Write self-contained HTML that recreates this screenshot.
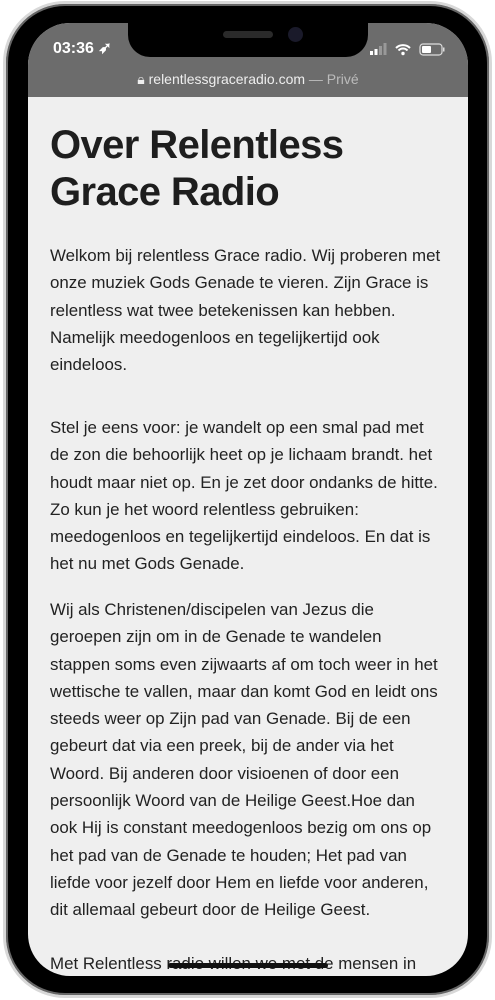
<!DOCTYPE html>
<html><head><meta charset="utf-8"><style>
*{margin:0;padding:0;box-sizing:border-box}
body{width:495px;height:1000px;background:#fff;position:relative;overflow:hidden;font-family:"Liberation Sans",sans-serif}
.frame{position:absolute;left:3px;top:1px;width:489px;height:997px;border-radius:62px;background:#000;border:3px solid #d8d8d8;box-shadow:inset 0 0 0 2px #666}
.screen{position:absolute;left:28px;top:23px;width:440px;height:953px;border-radius:42px;overflow:hidden;background:#efefef}
.bar{position:absolute;left:0;top:0;width:440px;height:74px;background:#6c6c6c}
.notch{position:absolute;left:100px;top:-2px;width:240px;height:36px;background:#000;border-radius:0 0 22px 22px}
.time{position:absolute;left:25px;top:15px;color:#fff;font-size:16px;font-weight:bold}
.url{position:absolute;left:0;width:440px;top:48px;text-align:center;color:#eee;font-size:14px}
.url span{color:#bbb}
h1{position:absolute;left:22px;top:99px;font-size:40px;line-height:47px;color:#1e1e1e;font-weight:bold;letter-spacing:-0.6px}
.p{position:absolute;left:22px;font-size:16.9px;line-height:27.3px;color:#222;white-space:nowrap}
.home{position:absolute;left:140px;top:940px;width:160px;height:5px;border-radius:3px;background:#111}
</style></head><body>
<div class="frame"></div>
<div class="screen">
<div class="bar">
<div class="notch"><div style="position:absolute;left:95px;top:10px;width:50px;height:7px;border-radius:4px;background:#2a2a2a"></div><div style="position:absolute;left:160px;top:6px;width:15px;height:15px;border-radius:50%;background:#1a1a2a"></div></div>
<div class="time">03:36 ➶</div>
<svg style="position:absolute;left:342px;top:20px" width="80" height="14">
<rect x="0" y="8" width="3" height="4" fill="#fff"/><rect x="4.5" y="6" width="3" height="6" fill="#fff"/><rect x="9" y="3" width="3" height="9" fill="#999"/><rect x="13.5" y="0" width="3" height="12" fill="#999"/>
<path d="M26 5 a10 10 0 0 1 14 0 M28.5 7.5 a6 6 0 0 1 9 0" stroke="#fff" stroke-width="2" fill="none"/><circle cx="33" cy="10.5" r="1.7" fill="#fff"/>
<rect x="50" y="1" width="22" height="11" rx="3" fill="none" stroke="#ddd" stroke-width="1.2"/><rect x="52" y="3" width="9" height="7" rx="1" fill="#fff"/><rect x="73" y="4.5" width="1.5" height="4" fill="#ddd"/>
</svg>
<div class="url">🔒︎ relentlessgraceradio.com <span>— Privé</span></div>
</div>
<h1>Over Relentless<br>Grace Radio</h1>
<div class="p" style="top:219px">Welkom bij relentless Grace radio. Wij proberen met<br>onze muziek Gods Genade te vieren. Zijn Grace is<br>relentless wat twee betekenissen kan hebben.<br>Namelijk meedogenloos en tegelijkertijd ook<br>eindeloos.</div>
<div class="p" style="top:391px">Stel je eens voor: je wandelt op een smal pad met<br>de zon die behoorlijk heet op je lichaam brandt. het<br>houdt maar niet op. En je zet door ondanks de hitte.<br>Zo kun je het woord relentless gebruiken:<br>meedogenloos en tegelijkertijd eindeloos. En dat is<br>het nu met Gods Genade.</div>
<div class="p" style="top:573px">Wij als Christenen/discipelen van Jezus die<br>geroepen zijn om in de Genade te wandelen<br>stappen soms even zijwaarts af om toch weer in het<br>wettische te vallen, maar dan komt God en leidt ons<br>steeds weer op Zijn pad van Genade. Bij de een<br>gebeurt dat via een preek, bij de ander via het<br>Woord. Bij anderen door visioenen of door een<br>persoonlijk Woord van de Heilige Geest.Hoe dan<br>ook Hij is constant meedogenloos bezig om ons op<br>het pad van de Genade te houden; Het pad van<br>liefde voor jezelf door Hem en liefde voor anderen,<br>dit allemaal gebeurt door de Heilige Geest.</div>
<div class="p" style="top:927px">Met Relentless radio willen we met de mensen in</div>
<div class="home"></div>
</div>
</body></html>
